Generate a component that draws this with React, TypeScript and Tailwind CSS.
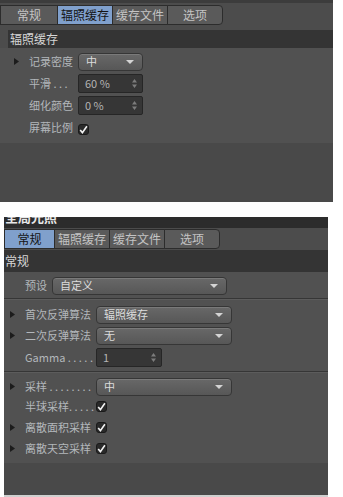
import React from 'react';

const font = { fontFamily: '"Noto Sans CJK SC", "Liberation Sans", sans-serif' };

function Marker() {
  return (
    <svg width="5" height="7" viewBox="0 0 5 7" className="shrink-0">
      <path d="M0 0L5 3.5L0 7Z" fill="#1c1c1c" />
    </svg>
  );
}

function Tab({ label, active, w, last }: { label: string; active?: boolean; w: number; last?: boolean }) {
  return (
    <div
      style={{ width: w }}
      className={
        'h-[20px] flex items-center justify-center text-[12px] border border-[#2c2c2c] -ml-px first:ml-0 ' +
        (active ? 'bg-[#80a0cc] text-[#141414]' : 'bg-[#5a5a5a] text-[#c4c4c4]') +
        (last ? ' rounded-r-[4px]' : '')
      }
    >
      {label}
    </div>
  );
}

function Dropdown({ value, w }: { value: string; w: number }) {
  return (
    <div
      style={{ width: w }}
      className="h-[18px] rounded-[4px] border border-[#363636] bg-gradient-to-b from-[#686868] to-[#575757] shadow-[inset_0_1px_0_#7a7a7a] flex items-center justify-between pl-[7px] pr-[8px] text-[11px] text-[#dcdcdc]"
    >
      <span>{value}</span>
      <svg width="8" height="4" viewBox="0 0 8 4">
        <path d="M0 0H8L4 4Z" fill="#d4d4d4" />
      </svg>
    </div>
  );
}

function NumInput({ value, w }: { value: string; w: number }) {
  return (
    <div
      style={{ width: w }}
      className="h-[19px] rounded-[2px] border border-[#262626] bg-[#363636] flex items-center justify-between pl-[6px] pr-[5px] text-[11px] text-[#b4b4b4]"
    >
      <span>{value}</span>
      <svg width="5" height="9" viewBox="0 0 5 9">
        <path d="M0 3.5L2.5 0L5 3.5Z M0 5.5L2.5 9L5 5.5Z" fill="#7c7c7c" />
      </svg>
    </div>
  );
}

function Check() {
  return (
    <div className="w-[11px] h-[11px] rounded-[3px] bg-[#2a2a2a] border border-[#1a1a1a] flex items-center justify-center">
      <svg width="9" height="9" viewBox="0 0 9 9">
        <path d="M1.2 5L3.4 7.6L7.9 1.2" stroke="#f2f2f2" strokeWidth="1.6" fill="none" />
      </svg>
    </div>
  );
}

function Row({
  marker,
  label,
  labelW,
  children,
  h = 19,
  markerX,
  labelX,
}: {
  marker?: boolean;
  label: string;
  labelW: number;
  children: React.ReactNode;
  h?: number;
  markerX: number;
  labelX: number;
}) {
  return (
    <div style={{ height: h }} className="flex items-center">
      <div style={{ width: labelX, paddingLeft: markerX }} className="flex shrink-0">
        {marker && <Marker />}
      </div>
      <div style={{ width: labelW }} className="shrink-0 text-[11px] text-[#b3b7bb] whitespace-nowrap overflow-hidden">
        {label}
      </div>
      {children}
    </div>
  );
}

export default function App() {
  return (
    <div className="w-[343px] h-[497px] bg-white overflow-hidden" style={font}>
      {/* top panel */}
      <div className="w-[333px] bg-[#4c4c4c]">
        <div className="h-[3px] bg-[#3c3c3c]" />
        <div className="h-[27px] pt-[2px] flex">
          <Tab label="常规" w={58} />
          <Tab label="辐照缓存" w={56} active />
          <Tab label="缓存文件" w={56} />
          <Tab label="选项" w={56} last />
        </div>
        <div className="ml-[8px] h-[18px] bg-[#343434] flex items-center pl-[2px] text-[12px] text-[#d6d6d6]">
          辐照缓存
        </div>
        <div className="h-[95px] bg-[#515151] pt-[4px] flex flex-col gap-[3px]">
          <Row marker markerX={14} labelX={29} label="记录密度" labelW={49}>
            <Dropdown value="中" w={65} />
          </Row>
          <Row markerX={14} labelX={29} label="平滑 . . ." labelW={49}>
            <NumInput value="60 %" w={65} />
          </Row>
          <Row markerX={14} labelX={29} label="细化颜色" labelW={49}>
            <NumInput value="0 %" w={65} />
          </Row>
          <Row markerX={14} labelX={29} label="屏幕比例" labelW={49}>
            <div className="mt-[4px]">
              <Check />
            </div>
          </Row>
        </div>
        <div className="h-[59px] bg-[#494949]" />
      </div>

      <div className="h-[15px]" />

      {/* bottom panel */}
      <div className="ml-[4px] w-[324px]">
        <div className="h-[11px] bg-[#2c2c2c] overflow-hidden">
          <div className="-mt-[9px] pl-[1px] text-[13px] font-bold text-[#e8e8e8] leading-[18px]">全局光照</div>
        </div>
        <div className="h-[22px] bg-[#4c4c4c] pt-[1px] flex">
          <Tab label="常规" w={51} active />
          <Tab label="辐照缓存" w={56} />
          <Tab label="缓存文件" w={56} />
          <Tab label="选项" w={56} last />
        </div>
        <div className="h-[22px] bg-[#343434] flex items-center pl-[1px] text-[12px] text-[#d6d6d6]">常规</div>
        <div className="h-[191px] bg-[#515151] pt-[4px]">
          <Row markerX={6} labelX={21} label="预设" labelW={27}>
            <Dropdown value="自定义" w={175} />
          </Row>
          <div className="mt-[3px] mb-[5px] h-[2px] border-t border-[#363636] border-b border-b-[#5c5c5c]" />
          <div className="flex flex-col gap-[2px]">
            <Row marker markerX={6} labelX={21} label="首次反弹算法" labelW={71}>
              <Dropdown value="辐照缓存" w={136} />
            </Row>
            <Row marker markerX={6} labelX={21} label="二次反弹算法" labelW={71}>
              <Dropdown value="无" w={136} />
            </Row>
            <Row markerX={6} labelX={21} label="Gamma . . . . ." labelW={71} h={20}>
              <NumInput value="1" w={66} />
            </Row>
          </div>
          <div className="mt-[4px] mb-[4px] h-[2px] border-t border-[#363636] border-b border-b-[#5c5c5c]" />
          <Row marker markerX={6} labelX={21} label="采样 . . . . . . . ." labelW={71}>
            <Dropdown value="中" w={136} />
          </Row>
          <Row markerX={6} labelX={21} label="半球采样. . . . ." labelW={71} h={21}>
            <Check />
          </Row>
          <Row marker markerX={6} labelX={21} label="离散面积采样" labelW={71} h={21}>
            <Check />
          </Row>
          <Row marker markerX={6} labelX={21} label="离散天空采样" labelW={71} h={21}>
            <Check />
          </Row>
        </div>
        <div className="h-[32px] bg-[#494949]" />
        <div className="h-[2px] bg-[#cfcfcf]" />
      </div>
    </div>
  );
}
